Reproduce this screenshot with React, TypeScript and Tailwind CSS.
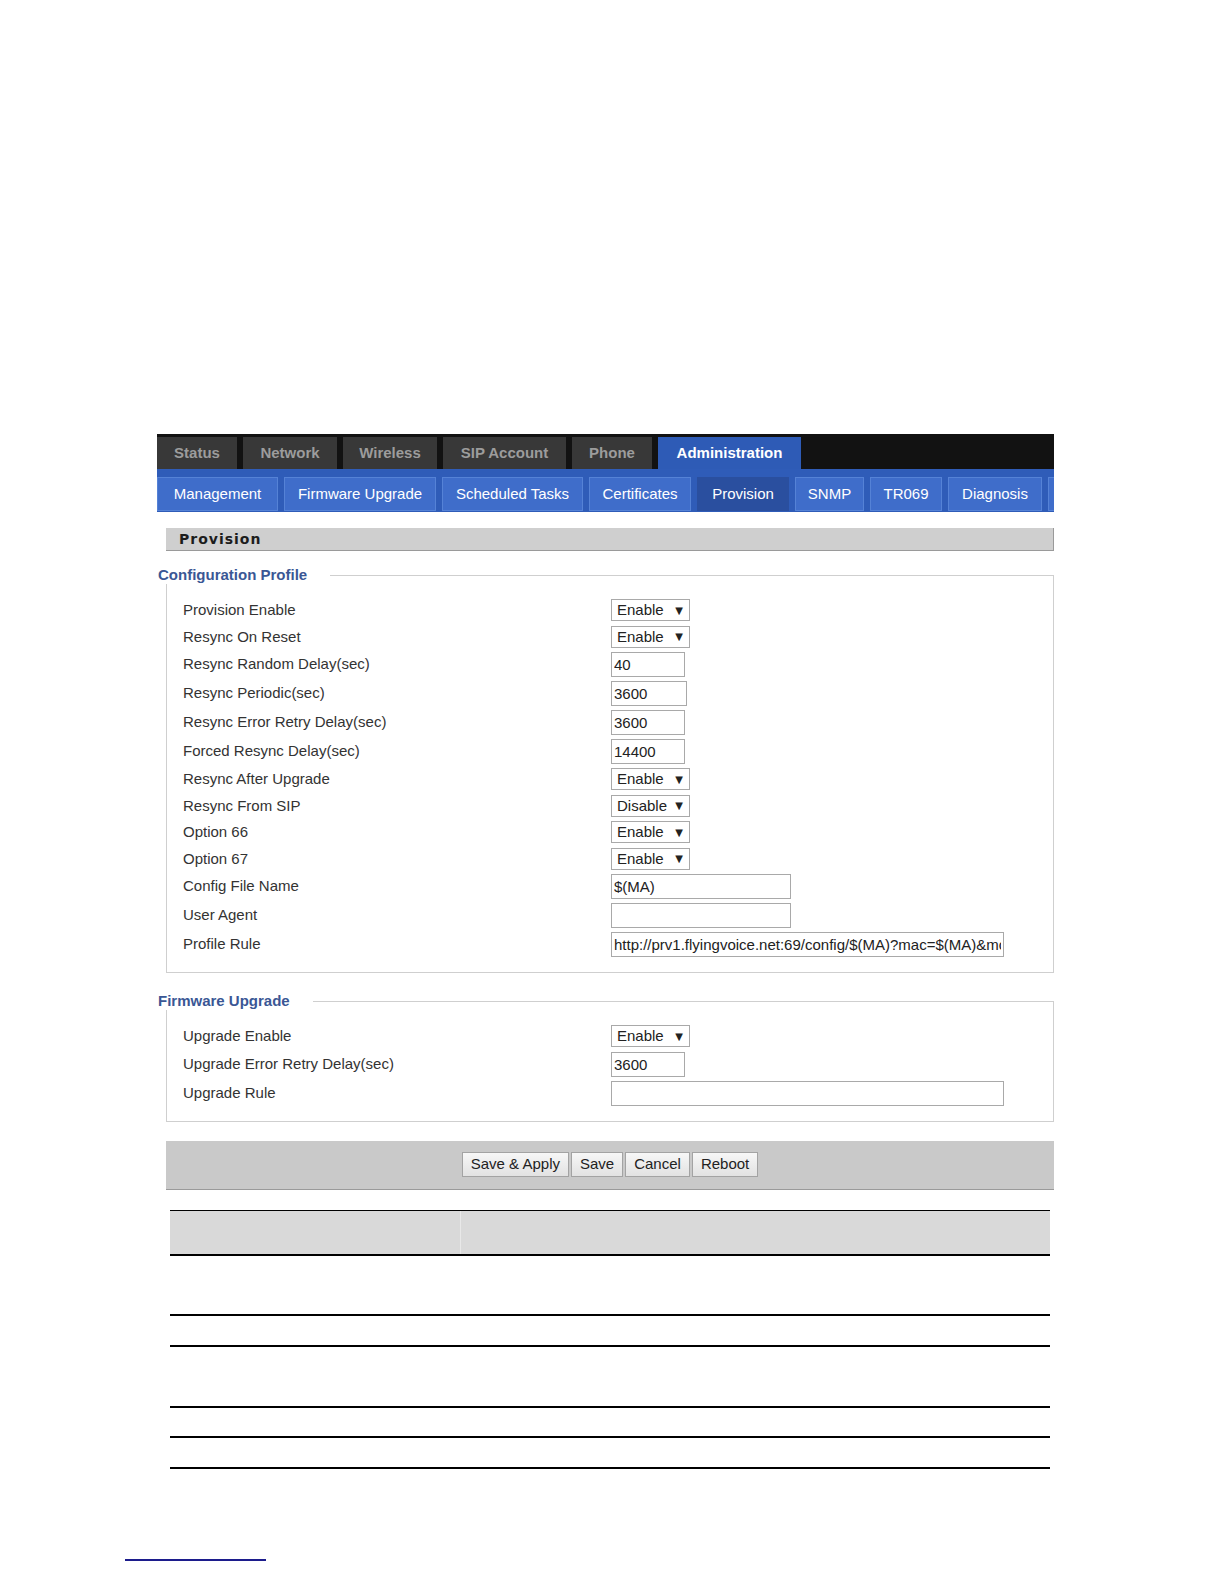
import React from "react";

type TopTab = { label: string; w: string; active?: boolean };

const topTabs: TopTab[] = [
  { label: "Status", w: "w-[80px]" },
  { label: "Network", w: "w-[94px]" },
  { label: "Wireless", w: "w-[94px]" },
  { label: "SIP Account", w: "w-[123px]" },
  { label: "Phone", w: "w-[80px]" },
  { label: "Administration", w: "w-[143px]", active: true },
];

// the last tab is cut by the page edge, only its left border shows
const subTabs: TopTab[] = [
  { label: "Management", w: "w-[121px]" },
  { label: "Firmware Upgrade", w: "w-[152px]" },
  { label: "Scheduled Tasks", w: "w-[141px]" },
  { label: "Certificates", w: "w-[102px]" },
  { label: "Provision", w: "w-[92px]", active: true },
  { label: "SNMP", w: "w-[69px]" },
  { label: "TR069", w: "w-[72px]" },
  { label: "Diagnosis", w: "w-[94px]" },
  { label: "", w: "w-[60px]" },
];

type Row =
  | { label: string; kind: "select"; value: string }
  | { label: string; kind: "input"; value: string; w: string };

const configRows: Row[] = [
  { label: "Provision Enable", kind: "select", value: "Enable" },
  { label: "Resync On Reset", kind: "select", value: "Enable" },
  { label: "Resync Random Delay(sec)", kind: "input", value: "40", w: "w-[74px]" },
  { label: "Resync Periodic(sec)", kind: "input", value: "3600", w: "w-[76px]" },
  { label: "Resync Error Retry Delay(sec)", kind: "input", value: "3600", w: "w-[74px]" },
  { label: "Forced Resync Delay(sec)", kind: "input", value: "14400", w: "w-[74px]" },
  { label: "Resync After Upgrade", kind: "select", value: "Enable" },
  { label: "Resync From SIP", kind: "select", value: "Disable" },
  { label: "Option 66", kind: "select", value: "Enable" },
  { label: "Option 67", kind: "select", value: "Enable" },
  { label: "Config File Name", kind: "input", value: "$(MA)", w: "w-[180px]" },
  { label: "User Agent", kind: "input", value: "", w: "w-[180px]" },
  {
    label: "Profile Rule",
    kind: "input",
    value: "http://prv1.flyingvoice.net:69/config/$(MA)?mac=$(MA)&model=$(PN)",
    w: "w-[393px]",
  },
];

const firmwareRows: Row[] = [
  { label: "Upgrade Enable", kind: "select", value: "Enable" },
  { label: "Upgrade Error Retry Delay(sec)", kind: "input", value: "3600", w: "w-[74px]" },
  { label: "Upgrade Rule", kind: "input", value: "", w: "w-[393px]" },
];

function FakeSelect({ value }: { value: string }) {
  return (
    <div className="flex h-[22px] w-[79px] items-center justify-between border border-[#a9a9a9] bg-white pl-[5px] pr-[6px] text-[#222]">
      <span>{value}</span>
      <span className="font-['DejaVu_Sans',sans-serif] text-[10px]">▼</span>
    </div>
  );
}

function FormRows({ rows }: { rows: Row[] }) {
  return (
    <div className="grid grid-cols-[428px_1fr] pl-[16px]">
      {rows.map((row) => (
        <React.Fragment key={row.label}>
          <div
            className={`flex items-center text-[#333] ${
              row.kind === "select" ? "h-[26.5px]" : "h-[29px]"
            }`}
          >
            {row.label}
          </div>
          <div className="flex items-center">
            {row.kind === "select" ? (
              <FakeSelect value={row.value} />
            ) : (
              <input
                readOnly
                value={row.value}
                className={`h-[25px] ${row.w} border border-[#a9a9a9] bg-white px-[2px] text-[15px] text-[#222] outline-none`}
              />
            )}
          </div>
        </React.Fragment>
      ))}
    </div>
  );
}

function Section({ title, rows, className }: { title: string; rows: Row[]; className?: string }) {
  return (
    <fieldset className={`ml-[9px] w-[888px] border border-[#cfcfcf] pb-[13px] ${className ?? ""}`}>
      <legend className="-ml-[9px] pr-[23px] text-[15px] font-bold leading-[18px] text-[#3a5795]">
        {title}
      </legend>
      <div className="pt-[13px]">
        <FormRows rows={rows} />
      </div>
    </fieldset>
  );
}

export default function App() {
  return (
    <div className="min-h-[1584px] bg-white font-['Liberation_Sans',Arial,sans-serif] text-[15px]">
      <div className="pl-[157px] pt-[434px]">
        <div className="w-[897px]">
          {/* main nav */}
          <div className="flex h-[35px] gap-[6px] overflow-hidden bg-[#121212] pt-[3px]">
            {topTabs.map((t) => (
              <div
                key={t.label}
                className={`flex shrink-0 items-center justify-center font-bold ${t.w} ${
                  t.active ? "bg-[#2e5bb6] text-white" : "bg-[#383838] text-[#9c9c9c]"
                }`}
              >
                {t.label}
              </div>
            ))}
          </div>

          {/* sub nav */}
          <div className="flex h-[43px] gap-[6px] overflow-hidden bg-[#2f5cb8] pb-[1px] pt-[8px]">
            {subTabs.map((t, i) => (
              <div
                key={i}
                className={`flex shrink-0 items-center justify-center border text-white ${t.w} ${
                  t.active
                    ? "border-[#2a4f9f] bg-[#2a4f9f]"
                    : "border-[#5582d6] bg-[#3f6dca] text-[#eef3ff]"
                }`}
              >
                {t.label}
              </div>
            ))}
          </div>

          {/* page title */}
          <div className="ml-[9px] mt-[16px] flex h-[23px] w-[888px] items-center border-b border-r border-[#9a9a9a] bg-[#cfcfcf] pl-[13px] font-['DejaVu_Sans',sans-serif] text-[14px] font-bold tracking-[1px] text-[#1c1c1c]">
            Provision
          </div>

          <Section title="Configuration Profile" rows={configRows} className="mt-[15px]" />
          <Section title="Firmware Upgrade" rows={firmwareRows} className="mt-[19px]" />

          {/* actions */}
          <div className="ml-[9px] mt-[19px] flex h-[49px] w-[888px] items-center justify-center gap-[2px] border-b border-[#9a9a9a] bg-[#c9c9c9]">
            {["Save & Apply", "Save", "Cancel", "Reboot"].map((b) => (
              <button
                key={b}
                className="h-[25px] border border-[#a3a3a3] bg-gradient-to-b from-[#f7f7f7] to-[#e2e2e2] px-[8px] text-[15px] text-[#222]"
              >
                {b}
              </button>
            ))}
          </div>

          {/* empty table */}
          <div className="ml-[13px] mt-[20px] w-[880px]">
            <div className="flex h-[46px] border-b-2 border-t border-black bg-[#d9d9d9]">
              <div className="w-[291px] border-r border-[#e8e8e8]" />
              <div className="flex-1" />
            </div>
            <div className="h-[60px] border-b-2 border-black" />
            <div className="h-[31px] border-b-2 border-black" />
            <div className="h-[61px] border-b-2 border-black" />
            <div className="h-[30px] border-b-2 border-black" />
            <div className="h-[31px] border-b-2 border-black" />
          </div>
        </div>
      </div>

      <div className="pl-[125px] pt-[90px]">
        <div className="h-[2px] w-[141px] bg-[#1c1c8c]" />
      </div>
    </div>
  );
}
